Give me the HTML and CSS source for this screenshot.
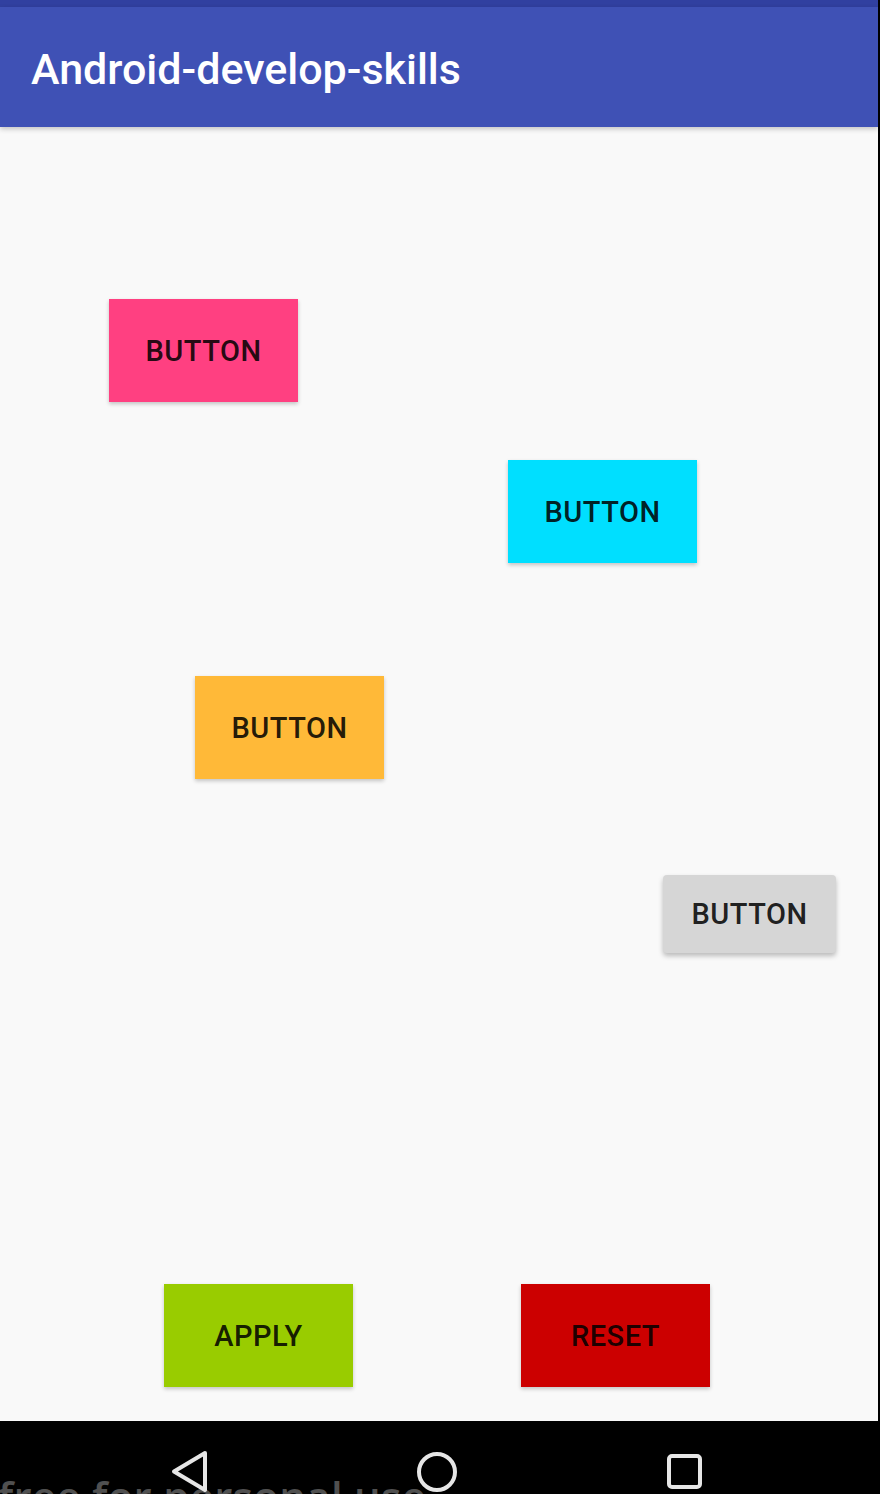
FILE: index.html
```html
<!DOCTYPE html>
<html lang="en">
<head>
<meta charset="utf-8">
<title>Android-develop-skills</title>
<link rel="stylesheet" href="styles.css">
</head>
<body>
<div class="screen">
  <div class="status-bar"></div>
  <header class="app-bar">
    <h1 class="app-title">Android-develop-skills</h1>
  </header>
  <main class="content">
    <button class="btn btn-pink">BUTTON</button>
    <button class="btn btn-cyan">BUTTON</button>
    <button class="btn btn-orange">BUTTON</button>
    <button class="btn btn-gray">BUTTON</button>
    <div class="actions">
      <button class="btn btn-apply">APPLY</button>
      <button class="btn btn-reset">RESET</button>
    </div>
  </main>
  <nav class="nav-bar">
    <span class="watermark">free for personal use</span>
    <svg class="nav-icon nav-back" width="40" height="44" viewBox="0 0 40 44">
      <path d="M35 3 L4 21.5 L35 40 Z" fill="none" stroke="#e6e6e6" stroke-width="4" stroke-linejoin="round"/>
    </svg>
    <svg class="nav-icon nav-home" width="44" height="44" viewBox="0 0 44 44">
      <circle cx="22" cy="22" r="18" fill="none" stroke="#e6e6e6" stroke-width="4"/>
    </svg>
    <svg class="nav-icon nav-recent" width="40" height="40" viewBox="0 0 40 40">
      <rect x="4" y="4" width="31" height="31" rx="3" fill="none" stroke="#e6e6e6" stroke-width="4"/>
    </svg>
  </nav>
</div>
</body>
</html>
```

FILE: styles.css
```css
* { box-sizing: border-box; }

html, body {
  margin: 0;
  padding: 0;
  background: #000;
}

body {
  width: 880px;
  height: 1494px;
  overflow: hidden;
  font-family: Roboto, "Liberation Sans", sans-serif;
}

.screen {
  width: 878px;
  height: 1494px;
  display: flex;
  flex-direction: column;
  background: #f9f9f9;
}

.status-bar {
  height: 7px;
  background: #3140a0;
  flex: none;
}

.app-bar {
  height: 120px;
  flex: none;
  background: #3f51b5;
  display: flex;
  align-items: center;
  padding-left: 31px;
  box-shadow: 0 2px 5px rgba(0, 0, 0, 0.22);
  position: relative;
  z-index: 1;
}

.app-title {
  margin: 0;
  color: #fff;
  font-family: Roboto, "Liberation Sans", sans-serif;
  font-weight: 500;
  font-size: 43px;
  letter-spacing: 0;
  padding-top: 4px;
}

.content {
  flex: 1;
  display: flex;
  flex-direction: column;
  align-items: flex-start;
  padding-bottom: 34px;
}

.btn {
  border: none;
  padding: 0;
  margin: 0;
  width: 189px;
  height: 103px;
  font-family: Roboto, "Liberation Sans", sans-serif;
  font-weight: 500;
  font-size: 29px;
  letter-spacing: 0.5px;
  color: rgba(0, 0, 0, 0.87);
  box-shadow: 0 2px 4px rgba(0, 0, 0, 0.22);
  display: flex;
  align-items: center;
  justify-content: center;
  flex: none;
}

.btn-pink { background: #ff4081; margin: 172px 0 0 109px; }
.btn-cyan { background: #00dfff; margin: 58px 0 0 508px; }
.btn-orange { background: #ffb938; margin: 113px 0 0 195px; }
.btn-gray {
  background: #d6d6d6;
  width: 173px;
  height: 78px;
  border-radius: 4px;
  margin: 96px 0 0 663px;
  box-shadow: 0 3px 5px rgba(0, 0, 0, 0.25);
}

.actions {
  margin-top: auto;
  display: flex;
  gap: 168px;
  padding-left: 164px;
}

.btn-apply { background: #99cc00; }
.btn-reset { background: #cc0000; }

.nav-bar {
  height: 73px;
  flex: none;
  background: #000;
  position: relative;
  overflow: hidden;
}

.watermark {
  position: absolute;
  left: -2px;
  top: 54px;
  font-family: "Open Sans", sans-serif;
  font-weight: 600;
  font-size: 42px;
  line-height: 1;
  color: #505050;
  white-space: nowrap;
  letter-spacing: 0.3px;
}

.nav-icon {
  position: absolute;
}

.nav-back { left: 170px; top: 29px; }
.nav-home { left: 415px; top: 29px; }
.nav-recent { left: 665px; top: 31px; }
```
